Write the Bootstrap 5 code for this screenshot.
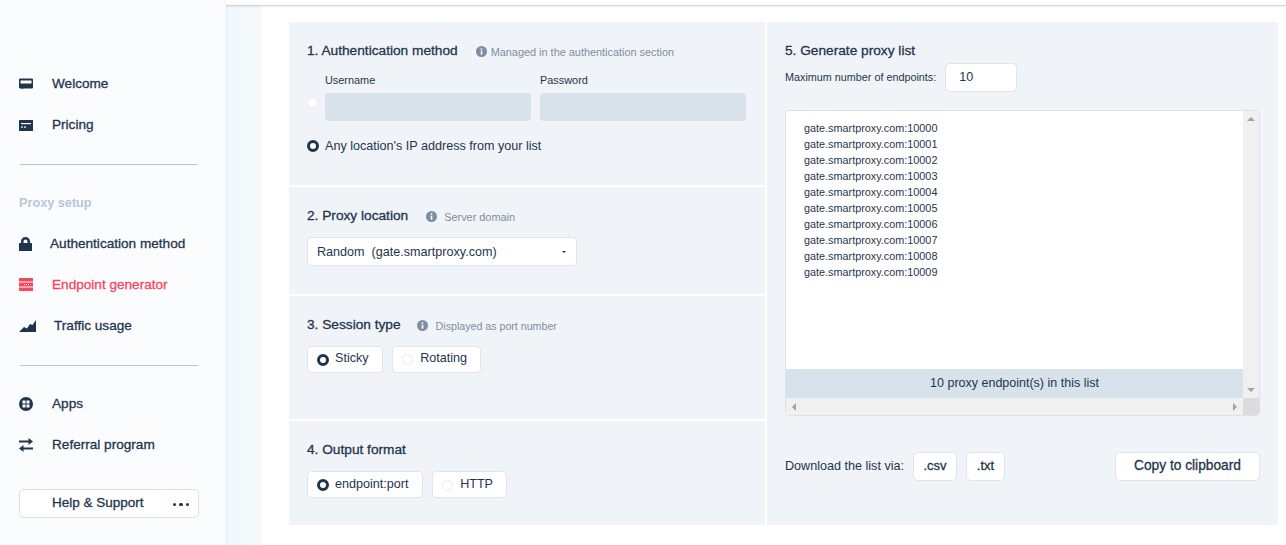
<!DOCTYPE html>
<html lang="en">
<head>
<meta charset="utf-8">
<title>Endpoint generator</title>
<link href="https://cdn.jsdelivr.net/npm/bootstrap@5.3.0/dist/css/bootstrap.min.css" rel="stylesheet">
<style>
html,body{height:545px;overflow:hidden}
body{font-family:"Liberation Sans",Arial,sans-serif;font-size:14px;color:#1f354d;background:#fff}
.shell{height:545px;width:1286px}
.side{width:227px;flex:none;background:#fbfcfe;border-right:1px solid #e6eef4;padding:63px 27px 0 19px}
.side-item{height:41px;font-size:13.6px;color:#1f354d;-webkit-text-stroke:.3px #1f354d}
.side-item svg{flex:none}
.side-item span{padding-top:2px}
.side-item.on{color:#f6475f;-webkit-text-stroke:.3px #f6475f}
.side-rule{height:1px;margin:0;opacity:1;border:0}
.r1{background:#b3c6d9;margin:19px 1px 18px 1px}
.r2{background:#b9c5d2;margin:19px 1px 17px 1px}
.side-head{height:40px;font-size:12.7px;color:#b7c7da;font-weight:700;line-height:40px}
.help{height:29px;width:180px;margin-top:24px;background:#fff;border:1px solid #d8e2ea;border-radius:5px;padding:0 9px 0 32px;font-size:13.5px;-webkit-text-stroke:.3px #1f354d}
.dots{display:flex;gap:3px;padding-top:2px}
.dots i{width:3.5px;height:3.5px;border-radius:50%;background:#1f354d;display:block}
.strip1{width:17px;flex:none;background:#f0f9fe}
.strip2{width:17px;flex:none;background:#f6f9fc}
.main{flex:1;position:relative;min-width:0;padding:22px 8px 0 28px}
.topline{position:absolute;left:-35px;right:0;top:0;height:5px;background:#fff;box-shadow:0 1px 2px rgba(120,120,120,.4)}
.colL{width:476px;flex:none;margin-right:2px}
.colR{width:511px;flex:none;height:503px;background:#f0f4f8;padding:21px 18px 0 18px}
.sec{background:#f0f4f8;padding:0 18px;margin-bottom:2px}
.s1{height:163px;padding-top:21px}
.s2{height:107px;padding-top:21px}
.s3{height:123px;padding-top:21px}
.s4{height:104px;padding-top:21px;margin-bottom:0}
.ttl{font-size:13.7px;line-height:15px;margin:0;color:#1f354d;-webkit-text-stroke:.3px #1f354d;font-weight:400}
.hint{font-size:10.9px;color:#7c8ea3;line-height:15px;padding-top:2px}
.hint-n{font-size:10.65px}
.ic{width:11px;height:11px;flex:none;margin-top:3px}
.flab{font-size:10.9px;color:#1f354d;line-height:14px}
.fake-in{height:28px;width:206px;background:#d8e2ea;border-radius:4px}
.rad{width:11px;height:11px;border-radius:50%;flex:none;background:#fff;border:1px solid #e6edf2}
.rad.sel{width:12px;height:12px;background:#fff;border:3px solid #1f354d}
.txt12{font-size:12.6px;color:#1f354d;line-height:16px}
.sel-box{width:270px;height:29px;background:#fff;border:1px solid #dde6ed;border-radius:4px;padding:0 10px 0 9px;font-size:12.6px;color:#1f354d}
.sel-box>span:first-child{padding-top:2px}
.caret-mini{width:0;height:0;border-left:2.5px solid transparent;border-right:2.5px solid transparent;border-top:2.5px solid #1f354d}
.opt{height:27px;background:#fff;border:1px solid #dde6ed;border-radius:4px;padding:0 13px 2px 9px;font-size:12.6px;color:#1f354d;gap:6px}
.s4 .opt{padding-bottom:1px}
.opt .rad{margin-top:2px}
.opt .rad:not(.sel){margin-right:1.6px}
.maxl{font-size:10.8px;color:#1f354d}
.num{width:72px;height:29px;background:#fff;border:1px solid #dde6ed;border-radius:5px;padding:0 0 0 13px;font-size:12.6px;color:#1f354d;margin-left:9px}
.listbox{width:475px;height:306px;margin-top:18px;border:1px solid #d8e2ea;border-radius:4px;background:#fff;overflow:hidden;display:grid;grid-template-columns:1fr 16px;grid-template-rows:1fr 17px}
.listin{display:flex;flex-direction:column;min-height:0}
.lines{flex:1;padding:9px 18px 0;font-size:10.83px;line-height:16px;color:#1f354d}
.cnt{height:29px;background:#d8e2ea;text-align:center;font-size:12.5px;line-height:28px;color:#1f354d}
.vbar,.hbar{background:#f0f0f0;display:flex;align-items:center;justify-content:space-between}
.vbar{flex-direction:column;padding:6px 0}
.hbar{padding:0 6px}
.corner{background:#dcdcdc}
.ta,.td,.tl,.tr{width:0;height:0;display:block}
.ta{border-left:4px solid transparent;border-right:4px solid transparent;border-bottom:4px solid #a3a3a3}
.td{border-left:4px solid transparent;border-right:4px solid transparent;border-top:4px solid #a3a3a3}
.tl{border-top:4px solid transparent;border-bottom:4px solid transparent;border-right:4px solid #a3a3a3}
.tr{border-top:4px solid transparent;border-bottom:4px solid transparent;border-left:4px solid #a3a3a3}
.dl{margin-top:36px;width:475px;font-size:12.6px}
.dbtn{height:29px;background:#fff;border:1px solid #dde6ed;border-radius:5px;font-size:13px;color:#1f354d;-webkit-text-stroke:.3px #1f354d;padding:0 0 2px;margin-left:9px;line-height:1}
.w44{width:44px}
.w39{width:39px}
.dbtn.big{width:145px;margin-left:auto;font-size:13.75px}
</style>
</head>
<body>
<div class="shell d-flex">
  <aside class="side">
    <div class="side-item d-flex align-items-center"><svg width="14" height="13" viewBox="0 0 14 13" style="margin-right:19px"><path d="M0 2.500a1 1 0 0 1 1-1h12a1 1 0 0 1 1 1v8a1 1 0 0 1-1 1H4l-1 1-.3-1H1a1 1 0 0 1-1-1z" fill="#1f354d"/><rect x="1.500" y="3.500" width="11" height="3" fill="#fff"/></svg><span>Welcome</span></div>
    <div class="side-item d-flex align-items-center"><svg width="14" height="12" viewBox="0 0 14 12" style="margin-right:19px"><rect width="14" height="11" y="1" fill="#1f354d" rx=".5"/><rect x="2" y="4" width="10" height="1.200" fill="#fff"/><rect x="2" y="7.500" width="2" height="1.200" fill="#fff"/><rect x="5" y="7.500" width="2" height="1.200" fill="#fff"/></svg><span>Pricing</span></div>
    <hr class="side-rule r1">
    <div class="side-head">Proxy setup</div>
    <div class="side-item d-flex align-items-center"><svg width="13" height="14" viewBox="0 0 13 14" style="margin-right:18px"><path d="M0 6.500a.5.5 0 0 1 .5-.5H2V4.500a4.500 4.500 0 0 1 9 0V6h1.500a.5.5 0 0 1 .5.5V14H0zM4.500 6h4V4.500a2 2 0 0 0-4 0z" fill="#1f354d"/></svg><span>Authentication method</span></div>
    <div class="side-item on d-flex align-items-center"><svg width="14" height="13" viewBox="0 0 14 13" style="margin-right:19px"><rect width="14" height="3.500" fill="#f6475f"/><rect y="4.500" width="14" height="4" fill="#f6475f"/><rect y="9.500" width="14" height="3.500" fill="#f6475f"/><rect x="5" y="6" width="1" height="1" fill="#fff"/><rect x="7" y="6" width="1" height="1" fill="#fff"/><rect x="9" y="6" width="1" height="1" fill="#fff"/></svg><span>Endpoint generator</span></div>
    <div class="side-item d-flex align-items-center"><svg width="17" height="12" viewBox="0 0 17 12" style="margin-right:18px"><path d="M0 12 5 7l3 1.500L11 4l2.500 1L17 0v12z" fill="#1f354d"/></svg><span>Traffic usage</span></div>
    <hr class="side-rule r2">
    <div class="side-item d-flex align-items-center"><svg width="14" height="14" viewBox="0 0 14 14" style="margin-right:19px"><circle cx="7" cy="7" r="7" fill="#1f354d"/><rect x="3.500" y="3.500" width="3" height="3" fill="#fff"/><rect x="7.500" y="3.500" width="3" height="3" fill="#fff"/><rect x="3.500" y="7.500" width="3" height="3" fill="#fff"/><rect x="7.500" y="7.500" width="3" height="3" fill="#fff"/></svg><span>Apps</span></div>
    <div class="side-item d-flex align-items-center"><svg width="14" height="14" viewBox="0 0 14 14" style="margin-right:19px"><path d="M9.500 0 14 3.500 9.500 7V4.500H0v-2h9.500zM4.500 7v2.500H14v2H4.500V14L0 10.500z" fill="#1f354d"/></svg><span>Referral program</span></div>
    <div class="help d-flex align-items-center justify-content-between"><span>Help &amp; Support</span><span class="dots"><i></i><i></i><i></i></span></div>
  </aside>
  <div class="strip1"></div>
  <div class="strip2"></div>
  <main class="main d-flex align-items-start">
    <div class="topline"></div>
    <div class="colL">
      <section class="sec s1">
        <div class="d-flex align-items-start">
          <h2 class="ttl">1. Authentication method</h2>
          <svg class="ic" style="margin-left:18px;margin-right:4px" viewBox="0 0 11 11"><circle cx="5.500" cy="5.500" r="5.500" fill="#7c8ea3"/><rect x="4.700" y="4.700" width="1.600" height="4" fill="#fff"/><rect x="4.700" y="2.300" width="1.600" height="1.500" fill="#fff"/></svg>
          <span class="hint">Managed in the authentication section</span>
        </div>
        <div class="d-flex" style="margin-top:13px">
          <div class="rad" style="margin-top:24px;margin-right:7px"></div>
          <div class="d-flex" style="gap:9px">
            <div><div class="flab" style="margin-bottom:6px">Username</div><div class="fake-in"></div></div>
            <div><div class="flab" style="margin-bottom:6px">Password</div><div class="fake-in"></div></div>
          </div>
        </div>
        <div class="d-flex align-items-center" style="margin-top:17px"><div class="rad sel" style="margin-right:6px"></div><span class="txt12">Any location's IP address from your list</span></div>
      </section>
      <section class="sec s2">
        <div class="d-flex align-items-start">
          <h2 class="ttl">2. Proxy location</h2>
          <svg class="ic" style="margin-left:18px;margin-right:7px" viewBox="0 0 11 11"><circle cx="5.500" cy="5.500" r="5.500" fill="#7c8ea3"/><rect x="4.700" y="4.700" width="1.600" height="4" fill="#fff"/><rect x="4.700" y="2.300" width="1.600" height="1.500" fill="#fff"/></svg>
          <span class="hint">Server domain</span>
        </div>
        <div class="sel-box d-flex align-items-center justify-content-between" style="margin-top:12px"><span>Random&nbsp; (gate.smartproxy.com)</span><span class="caret-mini"></span></div>
      </section>
      <section class="sec s3">
        <div class="d-flex align-items-start">
          <h2 class="ttl">3. Session type</h2>
          <svg class="ic" style="margin-left:16px;margin-right:8px" viewBox="0 0 11 11"><circle cx="5.500" cy="5.500" r="5.500" fill="#7c8ea3"/><rect x="4.700" y="4.700" width="1.600" height="4" fill="#fff"/><rect x="4.700" y="2.300" width="1.600" height="1.500" fill="#fff"/></svg>
          <span class="hint hint-n">Displayed as port number</span>
        </div>
        <div class="d-flex" style="gap:9px;margin-top:12px">
          <div class="opt d-flex align-items-center"><span class="rad sel"></span><span>Sticky</span></div>
          <div class="opt d-flex align-items-center"><span class="rad"></span><span>Rotating</span></div>
        </div>
      </section>
      <section class="sec s4">
        <h2 class="ttl">4. Output format</h2>
        <div class="d-flex" style="gap:9px;margin-top:14px">
          <div class="opt d-flex align-items-center"><span class="rad sel"></span><span>endpoint:port</span></div>
          <div class="opt d-flex align-items-center"><span class="rad"></span><span>HTTP</span></div>
        </div>
      </section>
    </div>
    <div class="colR">
      <h2 class="ttl">5. Generate proxy list</h2>
      <div class="d-flex align-items-center" style="margin-top:5px"><span class="maxl">Maximum number of endpoints:</span><div class="num d-flex align-items-center">10</div></div>
      <div class="listbox">
        <div class="listin">
          <div class="lines">gate.smartproxy.com:10000<br>gate.smartproxy.com:10001<br>gate.smartproxy.com:10002<br>gate.smartproxy.com:10003<br>gate.smartproxy.com:10004<br>gate.smartproxy.com:10005<br>gate.smartproxy.com:10006<br>gate.smartproxy.com:10007<br>gate.smartproxy.com:10008<br>gate.smartproxy.com:10009</div>
          <div class="cnt">10 proxy endpoint(s) in this list</div>
        </div>
        <div class="vbar"><span class="ta"></span><span class="td"></span></div>
        <div class="hbar"><span class="tl"></span><span class="tr"></span></div>
        <div class="corner"></div>
      </div>
      <div class="dl d-flex align-items-center">
        <span>Download the list via:</span>
        <button type="button" class="btn dbtn w44">.csv</button>
        <button type="button" class="btn dbtn w39">.txt</button>
        <button type="button" class="btn dbtn big">Copy to clipboard</button>
      </div>
    </div>
  </main>
</div>
<script src="https://cdn.jsdelivr.net/npm/bootstrap@5.3.0/dist/js/bootstrap.bundle.min.js"></script>
</body>
</html>
